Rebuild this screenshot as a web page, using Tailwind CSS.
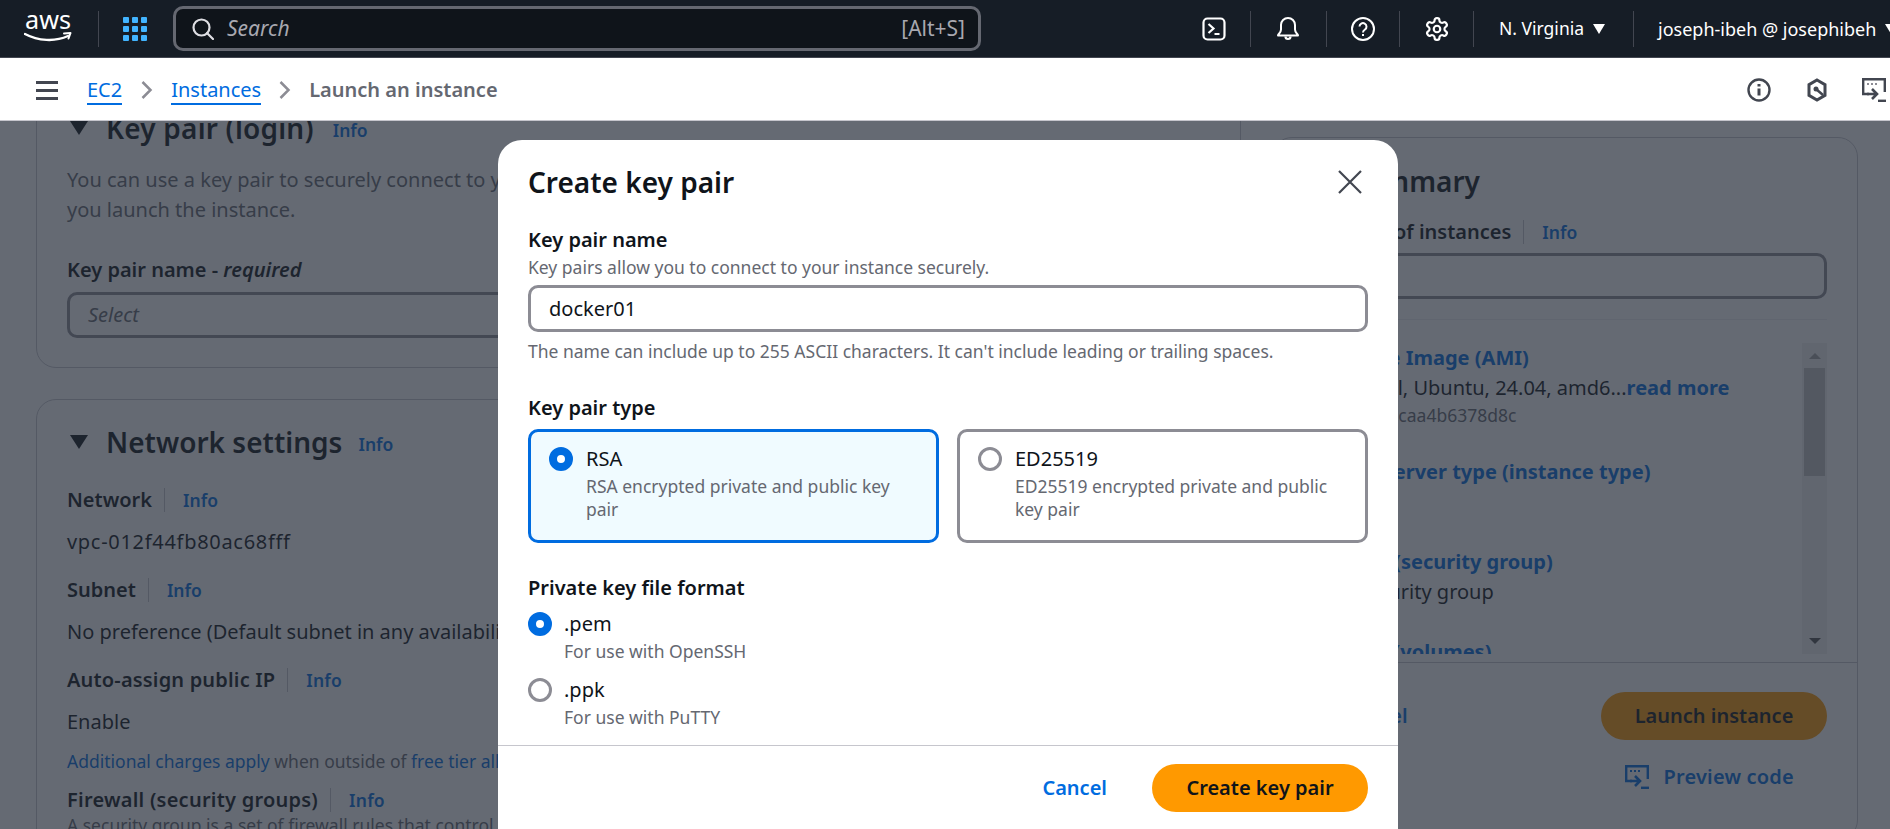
<!DOCTYPE html>
<html lang="en">
<head>
    <meta charset="UTF-8">
    <meta name="viewport" content="width=device-width, initial-scale=1.0">
    <title>Launch an instance | EC2</title>
    <script src="https://cdn.jsdelivr.net/npm/@tailwindcss/browser@4"></script>
</head>
<body class="h-screen overflow-hidden flex flex-col bg-white text-[#0f141a] text-[20px] font-['Noto_Sans',sans-serif]">
    <!-- top nav -->
    <header class="h-[58px] shrink-0 flex items-center overflow-hidden bg-[#161d26] border-b border-[#424650] text-white *:shrink-0">
        <svg class="ml-[24px] w-[50px] h-[30px]" viewBox="0 0 50 30" fill="none">
            <text x="1" y="15" font-family="Noto Sans" font-size="26" fill="#fff" textLength="46" lengthAdjust="spacingAndGlyphs">aws</text>
            <path d="M1 20c13 7 30 8 43 2" stroke="#fff" stroke-width="2.400" stroke-linecap="round"/>
            <path d="M40 19.500l6.500-.5-2 5.500" stroke="#fff" stroke-width="2" stroke-linecap="round" stroke-linejoin="round"/>
        </svg>
        <div class="ml-[24px] w-px h-[36px] bg-[#424650]"></div>
        <div class="ml-[24px] grid grid-cols-3 gap-[3px] w-[24px]">
            <i class="w-[6px] h-[6px] bg-[#42b4ff] rounded-[1px]"></i><i class="w-[6px] h-[6px] bg-[#42b4ff] rounded-[1px]"></i><i class="w-[6px] h-[6px] bg-[#42b4ff] rounded-[1px]"></i>
            <i class="w-[6px] h-[6px] bg-[#42b4ff] rounded-[1px]"></i><i class="w-[6px] h-[6px] bg-[#42b4ff] rounded-[1px]"></i><i class="w-[6px] h-[6px] bg-[#42b4ff] rounded-[1px]"></i>
            <i class="w-[6px] h-[6px] bg-[#42b4ff] rounded-[1px]"></i><i class="w-[6px] h-[6px] bg-[#42b4ff] rounded-[1px]"></i><i class="w-[6px] h-[6px] bg-[#42b4ff] rounded-[1px]"></i>
        </div>
        <div class="ml-[26px] w-[808px] h-[45px] flex items-center rounded-[10px] border-[3px] border-[#656871] bg-[#0f141a] pl-[16px] pr-[13px]">
            <svg class="w-[22px] h-[22px]" viewBox="0 0 22 22" fill="none" stroke="#dedee3" stroke-width="2.200">
                <circle cx="9.500" cy="9.500" r="8"/><path d="M15 15l6 6" stroke-linecap="round"/>
            </svg>
            <span class="ml-[13px] text-[21px] italic text-[#a8a8b0]">Search</span>
            <span class="ml-auto text-[21px] text-[#a8a8b0]">[Alt+S]</span>
        </div>
        <svg class="ml-[221px] w-[24px] h-[24px]" viewBox="0 0 24 24" fill="none" stroke="#fff" stroke-width="2.200">
            <rect x="1.500" y="1.500" width="21" height="21" rx="4"/><path d="M6.500 7l5 4.500-5 4.500M12.500 17h5"/>
        </svg>
        <div class="ml-[24px] w-px h-[36px] bg-[#424650]"></div>
        <svg class="ml-[25px] w-[24px] h-[24px]" viewBox="0 0 24 24" fill="none" stroke="#fff" stroke-width="2" stroke-linejoin="round">
            <path d="M2 18.500c0-1.500 3-2.500 3-6V8a7 7 0 0 1 14 0v4.500c0 3.500 3 4.500 3 6z"/><path d="M9.500 19.500a2.500 2.500 0 0 0 5 0" stroke-width="2.200"/>
        </svg>
        <div class="ml-[26px] w-px h-[36px] bg-[#424650]"></div>
        <svg class="ml-[24px] w-[24px] h-[24px]" viewBox="0 0 24 24" fill="none" stroke="#fff" stroke-width="2">
            <circle cx="12" cy="12" r="11"/><path d="M8.500 9.500a3.500 3.500 0 1 1 5.500 3c-1.300.9-2 1.600-2 3"/><path d="M12 17v2"/>
        </svg>
        <div class="ml-[24px] w-px h-[36px] bg-[#424650]"></div>
        <svg class="ml-[25px] w-[24px] h-[24px]" viewBox="1 1 22 22" fill="none" stroke="#fff" stroke-width="2" stroke-linejoin="round">
            <circle cx="12" cy="12" r="3"/>
            <path d="M12.220 2h-.44a2 2 0 0 0-2 2v.18a2 2 0 0 1-1 1.730l-.43.25a2 2 0 0 1-2 0l-.15-.08a2 2 0 0 0-2.730.730l-.22.38a2 2 0 0 0 .73 2.730l.15.1a2 2 0 0 1 1 1.720v.51a2 2 0 0 1-1 1.740l-.15.09a2 2 0 0 0-.73 2.730l.22.38a2 2 0 0 0 2.730.73l.15-.08a2 2 0 0 1 2 0l.43.25a2 2 0 0 1 1 1.730V20a2 2 0 0 0 2 2h.44a2 2 0 0 0 2-2v-.18a2 2 0 0 1 1-1.730l.43-.25a2 2 0 0 1 2 0l.15.08a2 2 0 0 0 2.730-.73l.22-.39a2 2 0 0 0-.73-2.730l-.15-.08a2 2 0 0 1-1-1.740v-.5a2 2 0 0 1 1-1.740l.15-.09a2 2 0 0 0 .73-2.730l-.22-.38a2 2 0 0 0-2.730-.73l-.15.08a2 2 0 0 1-2 0l-.43-.25a2 2 0 0 1-1-1.730V4a2 2 0 0 0-2-2z"/>
        </svg>
        <div class="ml-[24px] w-px h-[36px] bg-[#424650]"></div>
        <span class="ml-[25px] w-[85px] text-[17.500px] leading-none whitespace-nowrap">N. Virginia</span>
        <i class="ml-[9px] w-0 h-0 border-x-[6px] border-t-[10px] border-x-transparent border-t-white"></i>
        <div class="ml-[28px] w-px h-[36px] bg-[#424650]"></div>
        <span class="ml-[24px] text-[18px] leading-none whitespace-nowrap">joseph-ibeh @ josephibeh</span>
        <i class="ml-[9px] w-0 h-0 border-x-[6px] border-t-[10px] border-x-transparent border-t-white"></i>
    </header>

    <!-- breadcrumb bar -->
    <div class="relative z-10 h-[63px] shrink-0 flex items-center bg-white border-b border-[#c6c6cd] pt-[2px]">
        <div class="ml-[36px] w-[22px] flex flex-col gap-[5px]">
            <i class="h-[3px] bg-[#424650]"></i><i class="h-[3px] bg-[#424650]"></i><i class="h-[3px] bg-[#424650]"></i>
        </div>
        <a class="ml-[29px] text-[#006ce0] border-b-2 border-[#006ce0] leading-[27px]">EC2</a>
        <svg class="ml-[19px] w-[12px] h-[20px]" viewBox="0 0 12 20" fill="none" stroke="#8c8c94" stroke-width="2.500"><path d="M1.500 2l8 8-8 8"/></svg>
        <a class="ml-[18px] text-[#006ce0] border-b-2 border-[#006ce0] leading-[27px]">Instances</a>
        <svg class="ml-[18px] w-[12px] h-[20px]" viewBox="0 0 12 20" fill="none" stroke="#8c8c94" stroke-width="2.500"><path d="M1.500 2l8 8-8 8"/></svg>
        <span class="ml-[18px] font-semibold text-[#656871]">Launch an instance</span>
        <svg class="ml-auto w-[24px] h-[24px]" viewBox="0 0 24 24" fill="none" stroke="#424650" stroke-width="2.400">
            <circle cx="12" cy="12" r="10.500"/><path d="M12 10.500v7M12 6v2.500" stroke-width="3"/>
        </svg>
        <svg class="ml-[35px] w-[22px] h-[24px]" viewBox="0 0 22 24" fill="none" stroke="#424650" stroke-width="3">
            <path d="M11 2l8 4.600v10.800L11 22l-8-4.600V6.600z"/><circle cx="10" cy="11" r="2.500" fill="#424650" stroke="none"/><path d="M10 11l7 6" stroke-width="2.500"/>
        </svg>
        <svg class="ml-[34px] mr-[4px] w-[24px] h-[24px]" viewBox="0 0 24 24" fill="none" stroke="#424650" stroke-width="2.400">
            <path d="M7 16H1.200V1.200h21.600V14"/><path d="M5 6h2M9 6h2M13 6h2" stroke="#8c8c94" stroke-width="2"/>
            <path d="M5 16h10M10 11l5 5-5 5" stroke-width="2.600"/><path d="M16 22.800h8"/>
        </svg>
    </div>

    <!-- page behind the dialog -->
    <main class="relative flex-1 min-h-0 overflow-hidden flex items-start pl-[36px]">
        <div class="w-[1205px] shrink-0 -mt-[61px]">
            <section class="rounded-[20px] border border-[#c6c6cd] px-[30px] pt-[52px] pb-[29px]">
                <div class="relative pl-[39px] flex items-center h-[30px]">
                    <i class="absolute left-[3px] top-[8px] w-0 h-0 border-x-[9px] border-t-[14px] border-x-transparent border-t-[#0f141a]"></i>
                    <h2 class="text-[28px] font-semibold tracking-[0.2px]">Key pair (login)</h2>
                    <a class="ml-[19px] mt-[4px] text-[17.500px] font-semibold text-[#006ce0]">Info</a>
                </div>
                <p class="mt-[22px] leading-[30px] text-[#656871]">You can use a key pair to securely connect to your instance. Ensure that you have access to the selected key pair before<br>you launch the instance.</p>
                <p class="mt-[30px] leading-[30px] font-semibold">Key pair name - <em class="font-semibold">required</em></p>
                <div class="mt-[7px] h-[46px] rounded-[10px] border-[3px] border-[#8c8c94] pl-[18px] flex items-center italic text-[#656871]">Select</div>
            </section>
            <section class="mt-[31px] rounded-t-[20px] border border-[#c6c6cd] px-[30px] pt-[27px] h-[600px]">
                <div class="relative pl-[39px] flex items-center h-[30px]">
                    <i class="absolute left-[3px] top-[8px] w-0 h-0 border-x-[9px] border-t-[14px] border-x-transparent border-t-[#0f141a]"></i>
                    <h2 class="text-[28px] font-semibold">Network settings</h2>
                    <a class="ml-[16px] mt-[4px] text-[17.500px] font-semibold text-[#006ce0]">Info</a>
                </div>
                <div class="mt-[28px] h-[30px] flex items-center font-semibold">Network<i class="ml-[12px] w-px h-[24px] bg-[#c6c6cd]"></i><a class="ml-[18px] text-[17.500px] text-[#006ce0]">Info</a></div>
                <p class="mt-[12px] leading-[30px] tracking-[0.7px]">vpc-012f44fb80ac68fff</p>
                <div class="mt-[18px] h-[30px] flex items-center font-semibold">Subnet<i class="ml-[12px] w-px h-[24px] bg-[#c6c6cd]"></i><a class="ml-[18px] text-[17.500px] text-[#006ce0]">Info</a></div>
                <p class="mt-[12px] leading-[30px]">No preference (Default subnet in any availability zone)</p>
                <div class="mt-[18px] h-[30px] flex items-center font-semibold tracking-[0.17px]">Auto-assign public IP<i class="ml-[12px] w-px h-[24px] bg-[#c6c6cd]"></i><a class="ml-[18px] text-[17.500px] text-[#006ce0]">Info</a></div>
                <p class="mt-[12px] leading-[30px]">Enable</p>
                <p class="mt-[9px] leading-[30px] text-[17.500px] text-[#656871]"><a class="text-[#006ce0]">Additional charges apply</a> when outside of <a class="text-[#006ce0]">free tier allowance</a></p>
                <div class="mt-[9px] h-[30px] flex items-center font-semibold tracking-[0.23px]">Firewall (security groups)<i class="ml-[12px] w-px h-[24px] bg-[#c6c6cd]"></i><a class="ml-[18px] text-[17.500px] text-[#006ce0]">Info</a></div>
                <p class="-mt-[2px] leading-[24px] text-[17.500px] text-[#656871]">A security group is a set of firewall rules that control the traffic for your instance.</p>
            </section>
        </div>

        <aside class="ml-[31px] mt-[16px] w-[586px] shrink-0 h-[703px] rounded-[20px] border border-[#c6c6cd]">
            <div class="pl-[30px] pr-[30px] pt-[28px]">
                <div class="relative pl-[46px] h-[30px] flex items-center">
                    <i class="absolute left-[3px] top-[8px] w-0 h-0 border-x-[9px] border-t-[14px] border-x-transparent border-t-[#0f141a]"></i>
                    <h2 class="text-[28px] font-semibold">Summary</h2>
                </div>
                <div class="mt-[21px] ml-[5px] h-[30px] flex items-center font-semibold">Number of instances<i class="ml-[12px] w-px h-[24px] bg-[#c6c6cd]"></i><a class="ml-[18px] text-[17.500px] text-[#006ce0]">Info</a></div>
                <div class="mt-[6px] h-[46px] rounded-[10px] border-[3px] border-[#8c8c94]"></div>
                <hr class="mt-[20px] border-[#c6c6cd]/30">
                <div class="relative mt-[23px] h-[311px] overflow-hidden pl-[8px]">
                    <a class="block leading-[30px] font-bold text-[#006ce0]">Software Image (AMI)</a>
                    <p class="leading-[30px]">Canonical, Ubuntu, 24.04, amd6...<a class="font-bold text-[#006ce0]">read more</a></p>
                    <p class="-ml-[18px] leading-[24px] text-[17.500px] text-[#656871]">ami-020cba7caa4b6378d8c</p>
                    <a class="block mt-[30px] leading-[30px] font-bold text-[#006ce0]">Virtual server type (instance type)</a>
                    <p class="leading-[30px]">t2.micro</p>
                    <a class="block mt-[30px] leading-[30px] font-bold text-[#006ce0]">Firewall (security group)</a>
                    <p class="leading-[30px]">New security group</p>
                    <a class="block mt-[30px] leading-[30px] font-bold text-[#006ce0]">Storage (volumes)</a>
                    <div class="absolute right-0 top-0 bottom-0 w-[25px] bg-[#f1f1f1] flex flex-col items-center">
                        <i class="mt-[10px] w-0 h-0 border-x-[6px] border-b-[6px] border-x-transparent border-b-[#a3a3a3]"></i>
                        <i class="mt-[9px] w-[21px] h-[108px] bg-[#c1c1c1]"></i>
                        <i class="mt-auto mb-[10px] w-0 h-0 border-x-[6px] border-t-[6px] border-x-transparent border-t-[#505050]"></i>
                    </div>
                </div>
            </div>
            <div class="mt-[8px] border-t border-[#c6c6cd] pl-[70px] pr-[30px] pt-[29px]">
                <div class="flex items-center justify-between">
                    <a class="font-semibold text-[#006ce0]">Cancel</a>
                    <button class="w-[226px] h-[48px] rounded-full bg-[#ff9900] font-semibold">Launch instance</button>
                </div>
                <div class="mt-[22px] flex justify-end items-center pr-[33px] font-semibold text-[#006ce0]">
                    <svg class="w-[24px] h-[24px] mr-[14px]" viewBox="0 0 24 24" fill="none" stroke="#006ce0" stroke-width="2.400">
                        <path d="M7 16H1.200V1.200h21.600V14"/><path d="M5 6h2M9 6h2M13 6h2" stroke-width="2"/>
                        <path d="M5 16h10M10 11l5 5-5 5" stroke-width="2.600"/><path d="M16 22.800h8"/>
                    </svg>
                    <span class="tracking-[0.2px]">Preview code</span>
                </div>
            </div>
        </aside>

        <!-- dim layer -->
        <div class="absolute inset-0 bg-[#232b37]/70"></div>

        <!-- dialog -->
        <div class="absolute left-[498px] top-[19px] w-[900px] h-[760px] rounded-t-[24px] bg-white pt-[27px]">
            <div class="px-[30px]">
                <div class="flex items-center justify-between h-[30px]">
                    <h2 class="text-[28px] font-semibold">Create key pair</h2>
                    <svg class="w-[24px] h-[24px] mr-[6px]" viewBox="0 0 24 24" fill="none" stroke="#424650" stroke-width="2.200"><path d="M1 1l22 22M23 1L1 23"/></svg>
                </div>
                <p class="mt-[31px] leading-[24px] font-semibold">Key pair name</p>
                <p class="mt-[5px] leading-[20px] text-[17.500px] text-[#656871]">Key pairs allow you to connect to your instance securely.</p>
                <div class="mt-[8px] h-[47px] rounded-[10px] border-[3px] border-[#8c8c94] pl-[18px] flex items-center">docker01</div>
                <p class="mt-[9px] leading-[20px] text-[17.500px] text-[#656871]">The name can include up to 255 ASCII characters. It can't include leading or trailing spaces.</p>

                <p class="mt-[35px] leading-[24px] font-semibold">Key pair type</p>
                <div class="mt-[9px] grid grid-cols-2 gap-[18px]">
                    <div class="h-[114px] rounded-[10px] border-[3px] border-[#006ce0] bg-[#f0fbff] pl-[18px] pt-[15px] flex">
                        <i class="shrink-0 w-[24px] h-[24px] rounded-full border-[8px] border-[#006ce0] bg-white"></i>
                        <div class="ml-[13px] pr-[12px]">
                            <p class="leading-[24px]">RSA</p>
                            <p class="mt-[4px] leading-[23px] text-[17.500px] text-[#656871]">RSA encrypted private and public key pair</p>
                        </div>
                    </div>
                    <div class="h-[114px] rounded-[10px] border-[3px] border-[#8c8c94] pl-[18px] pt-[15px] flex">
                        <i class="shrink-0 w-[24px] h-[24px] rounded-full border-[3px] border-[#8c8c94] bg-white"></i>
                        <div class="ml-[13px] pr-[12px]">
                            <p class="leading-[24px]">ED25519</p>
                            <p class="mt-[4px] leading-[23px] text-[17.500px] text-[#656871]">ED25519 encrypted private and public key pair</p>
                        </div>
                    </div>
                </div>

                <p class="mt-[33px] leading-[24px] font-semibold">Private key file format</p>
                <div class="mt-[12px] flex">
                    <i class="shrink-0 w-[24px] h-[24px] rounded-full border-[8px] border-[#006ce0] bg-white"></i>
                    <div class="ml-[12px]">
                        <p class="leading-[24px]">.pem</p>
                        <p class="mt-[3px] leading-[24px] text-[17.500px] text-[#656871]">For use with OpenSSH</p>
                    </div>
                </div>
                <div class="mt-[15px] flex">
                    <i class="shrink-0 w-[24px] h-[24px] rounded-full border-[3px] border-[#8c8c94] bg-white"></i>
                    <div class="ml-[12px]">
                        <p class="leading-[24px]">.ppk</p>
                        <p class="mt-[3px] leading-[24px] text-[17.500px] text-[#656871]">For use with PuTTY</p>
                    </div>
                </div>
            </div>
            <div class="mt-[16px] border-t border-[#c6c6cd] pt-[18px] pr-[30px] flex justify-end items-center">
                <a class="font-semibold text-[#006ce0]">Cancel</a>
                <button class="ml-[45px] w-[216px] h-[48px] rounded-full bg-[#ff9900] font-semibold">Create key pair</button>
            </div>
        </div>
    </main>
</body>
</html>
